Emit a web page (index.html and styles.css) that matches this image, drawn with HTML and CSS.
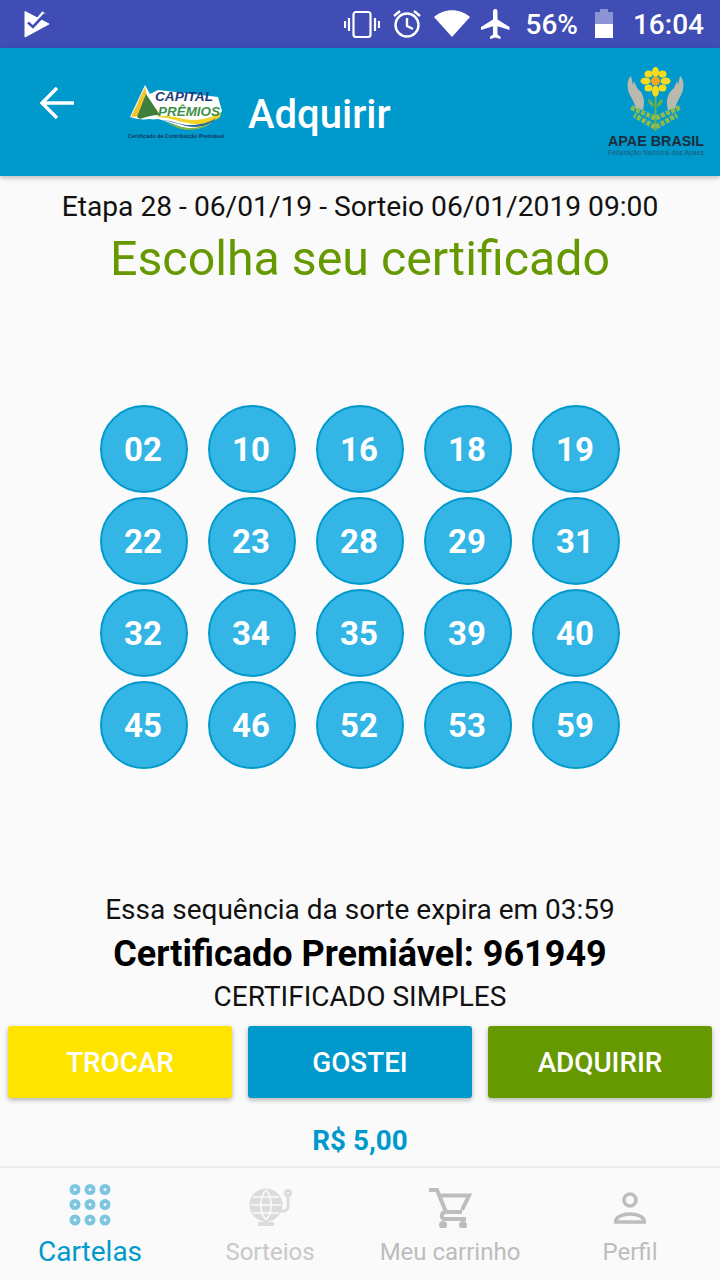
FILE: index.html
```html
<!DOCTYPE html>
<html lang="pt-BR">
<head>
<meta charset="utf-8">
<title>Adquirir</title>
<link rel="stylesheet" href="styles.css">
</head>
<body>
<div class="screen">
  <div class="status">
    <svg width="28" height="28" viewBox="0 0 28 28"><path d="M1 1.500 25 14 1 27Z" fill="#fff" stroke="#fff" stroke-linejoin="round"/><path d="M11 13 20 2.500" stroke="#fff" stroke-width="4" fill="none"/><path d="M4 12.500l5 4.500L21 4" fill="none" stroke="#3f4db5" stroke-width="2.600"/></svg>
    <div class="st-right">
      <svg width="36" height="28" viewBox="0 0 36 28" fill="none" stroke="#fff" stroke-width="2.200"><rect x="9.500" y="2" width="17" height="25" rx="2.500"/><path d="M5 8v13M1 11v7M31 8v13M35 11v7"/></svg>
      <svg class="st-alarm" width="30" height="30" viewBox="0 0 30 30" fill="none" stroke="#fff" stroke-width="2.400"><circle cx="15" cy="16" r="11.500"/><path d="M15 9v8l6 3M2 7l6-5M28 7l-6-5"/></svg>
      <svg class="st-wifi" width="36" height="28" viewBox="0 0 36 28"><path d="M0 7C10-2 26-2 36 7L18 27Z" fill="#fff"/></svg>
      <svg class="st-plane" width="36" height="36" viewBox="0 0 24 24"><path d="M21 16v-2l-8-5V3.500a1.500 1.500 0 0 0-3 0V9l-8 5v2l8-2.500V19l-2 1.500V22l3.500-1 3.500 1v-1.500L13 19v-5.500z" fill="#fff"/></svg>
      <span class="st-pct">56%</span>
      <svg class="st-batt" width="18" height="32" viewBox="0 0 18 32"><path d="M5 1h8v3h5v12H0V4h5z" fill="#8c95d3"/><rect y="16" width="18" height="14" fill="#fff"/></svg>
      <span class="st-time">16:04</span>
    </div>
  </div>
  <header class="bar">
    <svg class="back" width="36" height="36" viewBox="0 0 36 36" fill="none" stroke="#fff" stroke-width="3.400"><path d="M35 18H4M18 3 3 18l15 15"/></svg>
    <svg class="logo" width="98" height="56" viewBox="0 0 98 56">
      <path d="M17 1 2 33c6 2 12 3 20 2 4 1 6 0 8 0 10 2 20 8 32 10 14 1 24-6 32-18l-4-14L30 6 22 10Z" fill="#fff"/>
      <path d="M17 3 3 33l20-2Z" fill="#f4c430"/>
      <path d="M18 10 32 31c-8 0-14 2-20 4l-3-2Z" fill="#3f7f3c"/>
      <path d="M28 33c14-4 26 4 40 3 10-1 18-3 25-8l-1 5c-8 6-20 9-32 6-12-2-20-6-32-6z" fill="#f2d428"/>
      <path d="M34 36c10 0 18 6 32 5 9-1 16-3 22-7l-2 3c-8 6-18 7-28 5-8-2-16-5-24-6z" fill="#2b6d8f"/>
      <path d="M38 38c8 2 14 6 24 6 8 0 14-2 22-6-6 5-14 8-24 8-8 0-15-4-22-8z" fill="#7fb241"/>
      <text class="logo-a" x="27" y="17" textLength="58" lengthAdjust="spacingAndGlyphs">CAPITAL</text>
      <text class="logo-a logo-b" x="30" y="31.500" textLength="62" lengthAdjust="spacingAndGlyphs">PRÊMIOS</text>
      <text class="logo-c" x="0" y="54" textLength="96" lengthAdjust="spacingAndGlyphs">Certificado de Contribuição Premiável</text>
    </svg>
    <h1 class="bar-title">Adquirir</h1>
    <svg class="apae" width="98" height="92" viewBox="0 0 98 92">
      <path d="M25 10c-3 2-4 8-3 14 2 7 6 10 8 19l7 1c2-8 1-13-2-18l-4-4-3-7-1 4z" fill="#b9b9ae"/>
      <path d="M74 10c3 2 4 8 3 14-2 7-6 10-8 19l-7 1c-2-8-1-13 2-18l4-4 3-7 1 4z" fill="#b9b9ae"/>
      <path d="M49.500 30v35" stroke="#6db04a" stroke-width="2"/>
      <path d="M42 33c2 0 6 3 6 8-3 0-6-4-6-8zM57 33c-2 0-6 3-6 8 3 0 6-4 6-8z" fill="#6db04a"/>
      <path d="M49 52 24 41M50 52l25-11M49 61 28 49M50 61l21-12" stroke="#8dbb4f" stroke-width="5" stroke-dasharray="4 1.500" fill="none"/>
      <g fill="#f6dc1f">
        <ellipse cx="49.500" cy="6" rx="3.500" ry="5"/><ellipse cx="49.500" cy="25" rx="3.500" ry="5.500"/>
        <ellipse cx="39.500" cy="15" rx="5" ry="3.500"/><ellipse cx="59.500" cy="15" rx="5" ry="3.500"/>
        <ellipse cx="42.500" cy="8" rx="4" ry="3.500"/><ellipse cx="56.500" cy="8" rx="4" ry="3.500"/>
        <ellipse cx="42.500" cy="22" rx="4" ry="3.500"/><ellipse cx="56.500" cy="22" rx="4" ry="3.500"/>
      </g>
      <circle cx="49.500" cy="15" r="4.500" fill="#eea820"/>
      <text class="apae-a" x="2" y="80" textLength="96" lengthAdjust="spacingAndGlyphs">APAE BRASIL</text>
      <text class="apae-b" x="2" y="89" textLength="96" lengthAdjust="spacingAndGlyphs">Federação Nacional das Apaes</text>
    </svg>
  </header>
  <main class="content">
    <p class="etapa">Etapa 28 - 06/01/19 - Sorteio 06/01/2019 09:00</p>
    <h2 class="choose">Escolha seu certificado</h2>
    <div class="grid">
      <div class="ball">02</div><div class="ball">10</div><div class="ball">16</div><div class="ball">18</div><div class="ball">19</div>
      <div class="ball">22</div><div class="ball">23</div><div class="ball">28</div><div class="ball">29</div><div class="ball">31</div>
      <div class="ball">32</div><div class="ball">34</div><div class="ball">35</div><div class="ball">39</div><div class="ball">40</div>
      <div class="ball">45</div><div class="ball">46</div><div class="ball">52</div><div class="ball">53</div><div class="ball">59</div>
    </div>
    <p class="expire">Essa sequência da sorte expira em 03:59</p>
    <p class="cert">Certificado Premiável: 961949</p>
    <p class="simple">CERTIFICADO SIMPLES</p>
    <div class="actions">
      <button class="btn btn-yellow">TROCAR</button>
      <button class="btn btn-blue">GOSTEI</button>
      <button class="btn btn-green">ADQUIRIR</button>
    </div>
    <p class="price">R$ 5,00</p>
  </main>
  <nav class="tabs">
    <div class="tab tab-on">
      <svg width="44" height="44" viewBox="0 1.500 44 44" fill="none" stroke="#7cc6e2" stroke-width="4"><circle cx="7" cy="7" r="3.500"/><circle cx="22" cy="7" r="3.500"/><circle cx="37" cy="7" r="3.500"/><circle cx="7" cy="22" r="3.500"/><circle cx="22" cy="22" r="3.500"/><circle cx="37" cy="22" r="3.500"/><circle cx="7" cy="37.500" r="3.500"/><circle cx="22" cy="37.500" r="3.500"/><circle cx="37" cy="37.500" r="3.500"/></svg>
      <span>Cartelas</span>
    </div>
    <div class="tab tab-faint">
      <svg width="46" height="44" viewBox="0 -2 46 44" fill="none" stroke="#dcdcdc" stroke-width="3"><circle cx="19" cy="19" r="15" fill="#dcdcdc"/><path d="M4 19h30M6 11h26M6 27h26M19 4c-7 8-7 22 0 30M19 4c7 8 7 22 0 30" stroke="#fafafa" stroke-width="1.600"/><path d="M11 38h16M19 34v4" stroke-width="4"/><circle cx="41" cy="7" r="2.500"/><path d="M41 10v10c0 3-2 5-4 5h-4"/></svg>
      <span>Sorteios</span>
    </div>
    <div class="tab">
      <svg width="44" height="44" viewBox="0 -3 44 44" fill="none" stroke="#bdbdbd" stroke-width="4"><path d="M1 3h8l9 22h16M12 8.500h29L34 23"/><path d="M18 25c-5 0-6 7-1 7h21"/><circle cx="15" cy="38" r="4" fill="#bdbdbd" stroke="none"/><circle cx="35" cy="38" r="4" fill="#bdbdbd" stroke="none"/></svg>
      <span>Meu carrinho</span>
    </div>
    <div class="tab">
      <svg width="44" height="44" viewBox="0 0 44 44" fill="none" stroke="#bdbdbd" stroke-width="3.500"><circle cx="22" cy="16" r="6"/><path d="M7.750 38v-1c0-4 7-7 14.250-7s14.250 3 14.250 7v1z"/></svg>
      <span>Perfil</span>
    </div>
  </nav>
</div>
</body>
</html>
```
FILE: styles.css
```css
* { box-sizing: border-box; }
html, body { margin: 0; padding: 0; }
body { font-family: Roboto, "Liberation Sans", sans-serif; background: #fafafa; }
.screen { width: 720px; height: 1280px; display: flex; flex-direction: column; overflow: hidden; background: #fafafa; }

.status { height: 48px; flex: none; background: #3f4db5; color: #fff; display: flex; align-items: center; justify-content: space-between; padding: 0 16px 0 24px; }
.st-right { display: flex; align-items: center; }
.st-alarm { margin-left: 12px; }
.st-wifi { margin-left: 12px; }
.st-plane { margin-left: 8px; }
.st-pct { font-size: 28px; font-weight: 500; margin-left: 12px; }
.st-batt { margin-left: 17px; }
.st-time { font-size: 28px; font-weight: 500; margin-left: 20px; }

.bar { height: 128px; flex: none; background: #0099cc; display: flex; align-items: center; padding: 0 16px 0 39px; box-shadow: 0 2px 5px rgba(0,0,0,.25); position: relative; z-index: 1; color: #fff; }
.back { margin-top: -18px; }
.logo { margin-left: 53px; }
.bar-title { font-size: 40px; font-weight: 500; margin: 4px 0 0 22px; flex: 1; }
.logo-a { font: italic 900 13px "Liberation Sans", sans-serif; fill: #1d3a7a; }
.logo-b { fill: #3e8f45; }
.logo-c { font: 700 5px "Liberation Sans", sans-serif; fill: #14365f; }
.apae-a { font: 700 14.500px "Liberation Sans", sans-serif; fill: #1c2d3d; }
.apae-b { font: 400 6.800px "Liberation Sans", sans-serif; fill: #1f5a7a; }

.content { flex: 1; display: flex; flex-direction: column; align-items: center; min-height: 0; }
.content p, .content h2 { margin: 0; }
.content .etapa { font-size: 28.200px; line-height: 32px; color: #111; margin-top: 15px; }
.content .choose { font-size: 48.300px; font-weight: 400; line-height: 56px; color: #669900; margin-top: 8px; }
.grid { display: grid; grid-template-columns: repeat(5, 88px); grid-auto-rows: 88px; gap: 4px 20px; margin-top: 118px; }
.ball { border-radius: 50%; background: #33b5e5; border: 2px solid #0099cc; color: #fff; font-size: 33px; font-weight: 700; display: flex; align-items: center; justify-content: center; padding-right: 2px; }
.content .expire { font-size: 28px; line-height: 32px; color: #111; margin-top: 125px; }
.content .cert { font-size: 36px; line-height: 44px; font-weight: 700; color: #000; margin-top: 6px; }
.content .simple { font-size: 28px; line-height: 32px; color: #111; margin-top: 5px; }
.actions { display: flex; gap: 16px; margin-top: 13px; width: 100%; padding: 0 8px; }
.btn { flex: 1; height: 72px; border: 0; border-radius: 3px; color: #fff; font: 500 27.800px Roboto, sans-serif; box-shadow: 0 2px 5px rgba(0,0,0,.3); padding: 0; }
.btn-yellow { background: #ffe400; }
.btn-blue { background: #0099cc; }
.btn-green { background: #669900; }
.content .price { font-size: 27.800px; line-height: 32px; font-weight: 700; color: #0099cc; margin-top: 27px; }

.tabs { height: 112px; flex: none; display: grid; grid-template-columns: repeat(4, 180px); background: #fafafa; box-shadow: 0 -1px 3px rgba(0,0,0,.1); }
.tab { display: flex; flex-direction: column; align-items: center; padding-top: 16px; color: #bdbdbd; font-size: 24px; line-height: 30px; gap: 9px; }
.tab-on { color: #0099cc; font-size: 28px; }
.tab-faint { color: #c8c8c8; }
```
